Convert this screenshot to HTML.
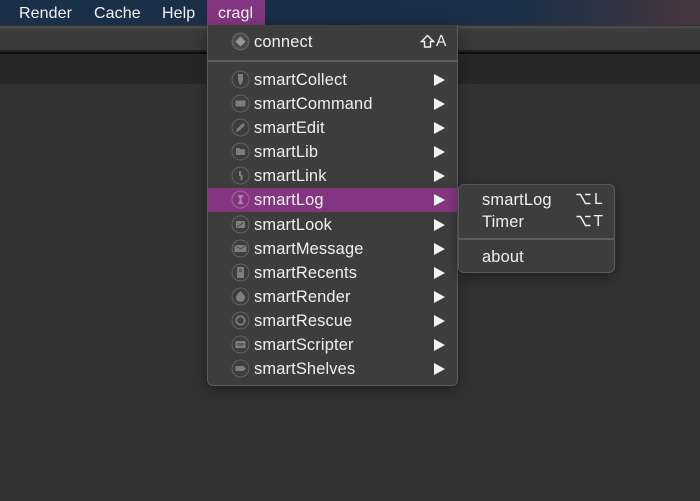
<!DOCTYPE html>
<html>
<head>
<meta charset="utf-8">
<style>
html,body{margin:0;padding:0;width:700px;height:501px;overflow:hidden;background:#323232;font-family:"Liberation Sans",sans-serif;}
#wrap{position:absolute;left:0;top:0;width:700px;height:501px;overflow:hidden;filter:blur(.35px)}
.abs{position:absolute}
#bar{left:0;top:0;width:700px;height:25px;background:linear-gradient(90deg,#1b3048 0,#182d47 50%,#1a2f47 72%,#2b3345 85%,#45353f 97%,#46363e 100%);}
.mt{position:absolute;top:4px;font-size:16px;line-height:20px;color:#f2f2f2;letter-spacing:.1px;white-space:nowrap}
#hl{left:207px;top:0;width:58px;height:25px;background:#83367f}
#tool{left:0;top:26px;width:700px;height:26px;background:linear-gradient(#4a4a4a 0,#4a4a4a 2px,#3c3c3c 3px,#383838 100%);}
#l1{left:0;top:50px;width:700px;height:2px;background:#222}
#l2{left:0;top:52px;width:700px;height:2px;background:#0e0e0e}
#strip{left:0;top:54px;width:700px;height:30px;background:#272727}
#main{left:0;top:84px;width:700px;height:417px;background:#323232}
#menu{left:207px;top:25px;width:249px;height:360px;background:#3d3d3e;border:1px solid #5a5a5a;border-top:none;border-radius:0 0 6px 6px;box-shadow:0 4px 14px rgba(0,0,0,.35)}
#sub{left:458px;top:184px;width:155px;height:87px;background:#3d3d3e;border:1px solid #5a5a5a;border-radius:6px;box-shadow:0 4px 12px rgba(0,0,0,.35)}
.sep{position:absolute;background:#5c5c5c;height:2px}
.row{position:absolute;left:208px;width:249px;height:24px}
.t{position:absolute;left:46px;top:2px;font-size:16.4px;line-height:20px;color:#f0f0f0;white-space:nowrap;letter-spacing:.17px}
.a{position:absolute;left:225.5px;top:6px;width:0;height:0;border-left:11px solid #f2f2f2;border-top:6px solid transparent;border-bottom:6px solid transparent}
.i{position:absolute;left:23px;top:2px}
.s{position:absolute;font-size:16.4px;line-height:20px;color:#f0f0f0;white-space:nowrap;letter-spacing:.17px}
.i circle:first-child{stroke:#626262}
.i path,.i rect{opacity:.85}
</style>
</head>
<body>
<div id="wrap">
<div class="abs" id="bar"></div>
<div class="abs" id="hl"></div>
<div class="mt" style="left:19px">Render</div>
<div class="mt" style="left:94px">Cache</div>
<div class="mt" style="left:162px">Help</div>
<div class="mt" style="left:218px">cragl</div>
<div class="abs" id="tool"></div>
<div class="abs" id="l1"></div>
<div class="abs" id="l2"></div>
<div class="abs" id="strip"></div>
<div class="abs" id="main"></div>

<div class="abs" id="menu"></div>
<div class="sep" style="left:208px;top:60px;width:249px"></div>

<div class="row" style="top:30px"><svg class="i" width="19" height="19" viewBox="0 0 19 19"><circle cx="9.5" cy="9.5" r="8.2" fill="#4a4a4a" stroke-width="1.5"/><path d="M9.5 4.5L14.5 9.5L9.5 14.5L4.5 9.5Z" fill="#a5a5a5"/></svg><div class="t">connect</div></div>
<svg class="abs" style="left:420px;top:34px" width="15" height="15" viewBox="0 0 15 15"><path d="M7.5 1.5L13.5 7.5H10.5V13H4.5V7.5H1.5Z" fill="none" stroke="#f2f2f2" stroke-width="1.4"/></svg>
<div class="s" style="left:436px;top:32px;font-size:15.5px">A</div>

<div class="row" style="top:68px"><svg class="i" width="19" height="19" viewBox="0 0 19 19"><circle cx="9.5" cy="9.5" r="8.5" fill="none" stroke-width="1"/><path d="M7 4H12V10L10.5 14.5H8.5L7 10Z" fill="#8a8a8a"/></svg><div class="t">smartCollect</div><div class="a"></div></div>
<div class="row" style="top:92px"><svg class="i" width="19" height="19" viewBox="0 0 19 19"><circle cx="9.5" cy="9.5" r="8.5" fill="none" stroke-width="1"/><rect x="4.5" y="6.5" width="10" height="6" fill="#8a8a8a"/></svg><div class="t">smartCommand</div><div class="a"></div></div>
<div class="row" style="top:116px"><svg class="i" width="19" height="19" viewBox="0 0 19 19"><circle cx="9.5" cy="9.5" r="8.5" fill="none" stroke-width="1"/><path d="M5 14L6 11L12 5L14 7L8 13Z" fill="#8a8a8a"/></svg><div class="t">smartEdit</div><div class="a"></div></div>
<div class="row" style="top:140px"><svg class="i" width="19" height="19" viewBox="0 0 19 19"><circle cx="9.5" cy="9.5" r="8.5" fill="none" stroke-width="1"/><path d="M5 6H8.5L9.5 7.2H14V13H5Z" fill="#8a8a8a"/></svg><div class="t">smartLib</div><div class="a"></div></div>
<div class="row" style="top:164px"><svg class="i" width="19" height="19" viewBox="0 0 19 19"><circle cx="9.5" cy="9.5" r="8.5" fill="none" stroke-width="1"/><path d="M8 5H10V9H11.5V14H9.5V10H8Z" fill="#8a8a8a"/></svg><div class="t">smartLink</div><div class="a"></div></div>
<div class="abs" style="left:208px;top:188px;width:249px;height:24px;background:#83367f"></div>
<div class="row" style="top:188px"><svg class="i" width="19" height="19" viewBox="0 0 19 19"><circle cx="9.5" cy="9.5" r="8.5" fill="none" style="stroke:#a06a9e" stroke-width="1"/><path d="M6.5 5H12.5L10 9.5L12.5 14H6.5L9 9.5Z" fill="#b58db3"/></svg><div class="t">smartLog</div><div class="a"></div></div>
<div class="row" style="top:212.5px"><svg class="i" width="19" height="19" viewBox="0 0 19 19"><circle cx="9.5" cy="9.5" r="8.5" fill="none" stroke-width="1"/><path d="M5 6H14V13H5Z" fill="#8a8a8a"/><path d="M6 12L13 7" stroke="#3d3d3e" stroke-width="1"/></svg><div class="t">smartLook</div><div class="a"></div></div>
<div class="row" style="top:236.5px"><svg class="i" width="19" height="19" viewBox="0 0 19 19"><circle cx="9.5" cy="9.5" r="8.5" fill="none" stroke-width="1"/><rect x="3.5" y="6" width="12" height="7" fill="#8a8a8a"/><path d="M3.5 6L9.5 10L15.5 6" fill="none" stroke="#3d3d3e" stroke-width=".8"/></svg><div class="t">smartMessage</div><div class="a"></div></div>
<div class="row" style="top:260.5px"><svg class="i" width="19" height="19" viewBox="0 0 19 19"><circle cx="9.5" cy="9.5" r="8.5" fill="none" stroke-width="1"/><rect x="6" y="4" width="7" height="11" fill="#8a8a8a"/><rect x="8" y="6" width="3" height="3" fill="#555"/></svg><div class="t">smartRecents</div><div class="a"></div></div>
<div class="row" style="top:284.5px"><svg class="i" width="19" height="19" viewBox="0 0 19 19"><circle cx="9.5" cy="9.5" r="8.5" fill="none" stroke-width="1"/><path d="M9.5 4C11 6 14 8 14 10.5A4.5 4.5 0 0 1 5 10.5C5 8 8 6 9.5 4Z" fill="#8a8a8a"/></svg><div class="t">smartRender</div><div class="a"></div></div>
<div class="row" style="top:308.5px"><svg class="i" width="19" height="19" viewBox="0 0 19 19"><circle cx="9.5" cy="9.5" r="8.5" fill="none" stroke-width="1"/><circle cx="9.5" cy="9.5" r="4.2" fill="none" stroke="#7a7a7a" stroke-width="2"/></svg><div class="t">smartRescue</div><div class="a"></div></div>
<div class="row" style="top:332.5px"><svg class="i" width="19" height="19" viewBox="0 0 19 19"><circle cx="9.5" cy="9.5" r="8.5" fill="none" stroke-width="1"/><rect x="4.5" y="6" width="10" height="7" fill="#8a8a8a"/><rect x="6.5" y="8" width="6" height="3" fill="#555"/></svg><div class="t">smartScripter</div><div class="a"></div></div>
<div class="row" style="top:356.5px"><svg class="i" width="19" height="19" viewBox="0 0 19 19"><circle cx="9.5" cy="9.5" r="8.5" fill="none" stroke-width="1"/><path d="M4.5 7H12.5L15 9.5L12.5 12H4.5Z" fill="#8a8a8a"/></svg><div class="t">smartShelves</div><div class="a"></div></div>

<div class="abs" id="sub"></div>
<div class="sep" style="left:459px;top:238px;width:155px"></div>
<div class="s" style="left:482px;top:189.5px">smartLog</div>
<div class="s" style="left:482px;top:211.5px">Timer</div>
<div class="s" style="left:482px;top:246.5px">about</div>
<svg class="abs" style="left:576px;top:192.5px" width="15" height="12" viewBox="0 0 15 12"><path d="M0.5 1.5H4.5L9.5 10.5H14.5M9 1.5H14.5" fill="none" stroke="#f0f0f0" stroke-width="1.5"/></svg>
<svg class="abs" style="left:576px;top:214.5px" width="15" height="12" viewBox="0 0 15 12"><path d="M0.5 1.5H4.5L9.5 10.5H14.5M9 1.5H14.5" fill="none" stroke="#f0f0f0" stroke-width="1.5"/></svg>
<div class="s" style="left:594px;top:189.5px;font-size:15.5px">L</div>
<div class="s" style="left:593.5px;top:211.5px;font-size:15.5px">T</div>
</div>
</body>
</html>
